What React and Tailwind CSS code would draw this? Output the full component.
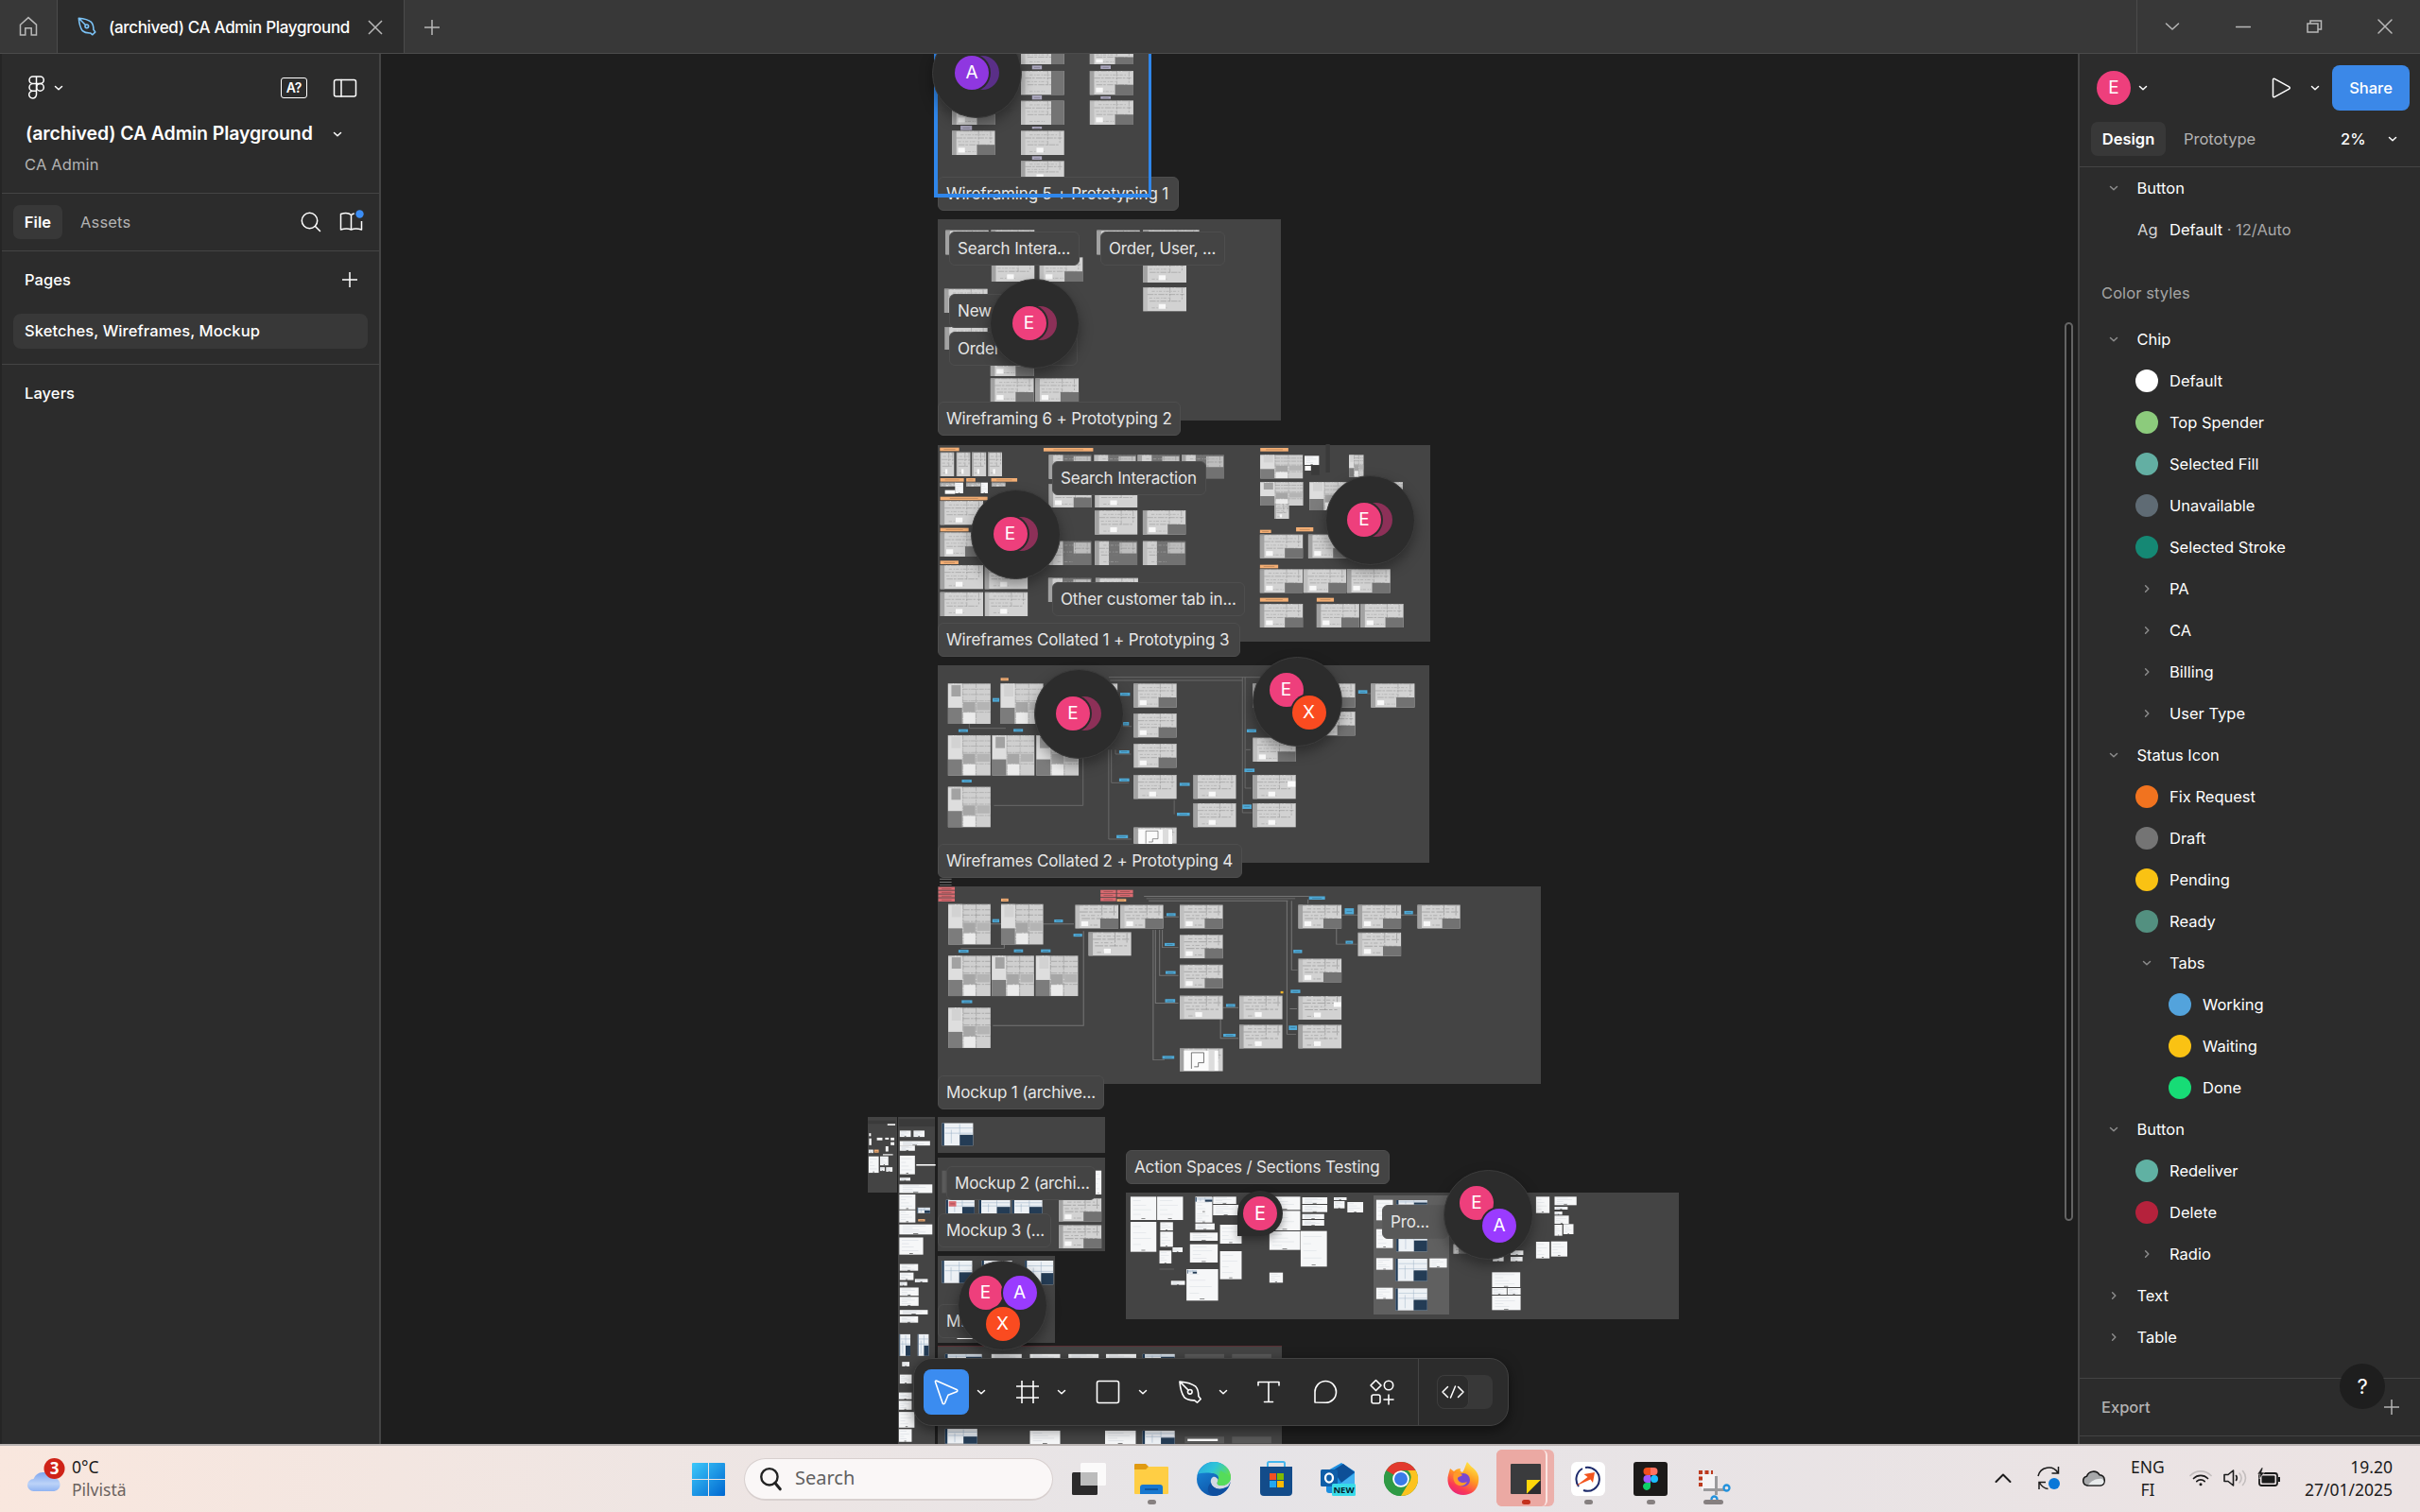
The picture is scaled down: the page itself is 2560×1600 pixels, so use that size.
import React from "react";

/* ---------- small icons ---------- */

const Svg = ({ size = 24, box = 24, className = "", sw = 1.5, children, ...rest }) => (
  <svg width={size} height={size} viewBox={`0 0 ${box} ${box}`} fill="none" stroke="currentColor" strokeWidth={sw}
    strokeLinecap="round" strokeLinejoin="round" className={`shrink-0 ${className}`} {...rest}>
    {children}
  </svg>
);

const ChevDown = ({ className = "" }) => (
  <Svg size={12} box={12} className={className}><path d="M2.5 4.5 6 7.8l3.5-3.3" /></Svg>
);
const ChevRight = ({ className = "" }) => (
  <Svg size={12} box={12} className={className}><path d="M4.6 2.8 7.8 6 4.6 9.2" /></Svg>
);
const Plus = ({ className = "", size = 24 }) => (
  <Svg size={size} className={className}><path d="M12 4v16M4 12h16" strokeLinecap="butt" /></Svg>
);
const PenNib = ({ size = 24, className = "", sw = 1.5 }) => (
  <Svg size={size} className={className} sw={sw}>
    <path d="M2.500 2.500c6 .5 11 1.700 14.500 4.500 1.800 2 2.600 5.500 2.600 8.800l2 2.600-3.200 3.200-2.500-2c-3.300.1-7-.7-9-2.500C4 13.500 3 8.500 2.500 2.500ZM2.800 2.800l7.600 7.600" />
    <circle cx="11.800" cy="11.800" r="2" />
  </Svg>
);

/* ---------- window tab bar ---------- */

function TabBar() {
  return (
    <header className="flex h-[57px] shrink-0 items-stretch border-b border-[#4b4b4b] bg-[#383838] text-[#b8b8b8]">
      <div className="flex w-[61px] items-center justify-center border-r border-[#4b4b4b]">
        <Svg size={24}><path d="M3.500 10.200 12 2.600l8.500 7.600v10.800h-5.300v-7.200H8.800V21H3.500Z" strokeLinejoin="miter" /></Svg>
      </div>
      <div className="flex w-[367px] items-center border-r border-[#4b4b4b] bg-[#2c2c2c] pl-[20px]">
        <PenNib size={22} className="text-[#7cc4f8]" sw={1.7} />
        <span className="ml-[12px] w-[258px] whitespace-nowrap pt-[3px] text-[17px] font-medium tracking-[-0.320px] text-white">(archived) CA Admin Playground</span>
        <Svg size={20} box={20} className="ml-[14px] mt-[1px]"><path d="M3 3l14 14M17 3 3 17" strokeLinecap="butt" /></Svg>
      </div>
      <div className="flex w-[58px] items-center justify-center pt-[1px]"><Plus size={24} /></div>
      <div className="flex-1" />
      <div className="flex w-[300px] items-center border-l border-[#4b4b4b]">
        <div className="flex w-[75px] justify-center"><Svg size={18} box={18}><path d="M2.500 6 9 12l6.500-6" /></Svg></div>
        <div className="flex w-[75px] justify-center"><Svg size={16} box={16}><path d="M0.500 8.500h15" /></Svg></div>
        <div className="flex w-[75px] justify-center">
          <Svg size={18} box={18}><path d="M2 6h11v9H2ZM5 6V3h11.500v9H13" strokeLinejoin="miter" /></Svg>
        </div>
        <div className="flex w-[75px] justify-center"><Svg size={18} box={18}><path d="M2 2l14 14M16 2 2 16" /></Svg></div>
      </div>
    </header>
  );
}

/* ---------- left panel ---------- */

function LeftPanel() {
  return (
    <aside className="flex w-[403px] shrink-0 flex-col border-r-2 border-l-2 border-r-[#444] border-l-[#252525] bg-[#2c2c2c] text-[16.500px] font-medium tracking-[0.080px] text-white">
      <div className="flex h-[148px] flex-col border-b border-[#444] pl-[24px]">
        <div className="mt-[22px] flex h-[28px] items-center">
          <svg width="26" height="28" viewBox="0 0 26 28" fill="none" stroke="currentColor" strokeWidth="1.500">
            <path d="M12.500 2H8.800a3.800 3.800 0 0 0 0 7.600h3.700ZM12.500 2h4a3.800 3.800 0 0 1 0 7.600h-4ZM12.500 9.600H8.800a3.800 3.800 0 0 0 0 7.600h3.700ZM12.500 17.200H8.800a3.900 3.900 0 1 0 3.700 3.900Z" />
            <circle cx="16.500" cy="13.400" r="3.800" />
          </svg>
          <ChevDown className="ml-[4px]" />
          <div className="ml-[229px] flex h-[22px] w-[28px] items-center justify-center rounded-[3px] border-[1.500px] border-white text-[14px] font-semibold leading-none tracking-[-0.300px]">A?</div>
          <Svg size={26} box={26} className="ml-[27px]"><rect x="1.500" y="4.500" width="23" height="17.500" rx="2" /><path d="M9 4.500V22" /></Svg>
        </div>
        <div className="mt-[23px] flex h-[24px] items-center">
          <span className="w-[305px] pl-[1px] whitespace-nowrap text-[19.500px] font-semibold tracking-[-0.110px]">(archived) CA Admin Playground</span>
          <ChevDown className="ml-[20px]" />
        </div>
        <span className="mt-[8px] h-[24px] leading-[24px] font-normal tracking-[0.150px] text-[#b3b3b3]">CA Admin</span>
      </div>
      <div className="flex h-[61px] items-center border-b border-[#444] pl-[12px]">
        <span className="flex h-[36px] w-[52px] items-center justify-center rounded-[7px] bg-[#383838] font-semibold">File</span>
        <span className="ml-[19px] w-[232px] font-normal tracking-[0.150px] text-[#b3b3b3]">Assets</span>
        <Svg size={24}><circle cx="10.500" cy="10.500" r="8.200" /><path d="m16.500 16.500 5 5" /></Svg>
        <svg width="28" height="26" viewBox="0 0 28 26" fill="none" stroke="currentColor" strokeWidth="1.500" className="ml-[17px] shrink-0" strokeLinejoin="round">
          <path d="M13.500 5.500v15.500M13.500 5.500C11 3.300 6 3.400 2.500 4.500V21c3.500-1.200 8.500-1.200 11 0 3-1.200 7-1.200 11 0v-9M13.500 5.500c1-.8 2-1.300 3.300-1.500" />
          <circle cx="22.500" cy="4.500" r="4.200" fill="#3b8df5" stroke="none" />
        </svg>
      </div>
      <div className="flex h-[120px] flex-col border-b border-[#444] px-[12px]">
        <div className="mt-[13px] flex h-[34px] items-center justify-between pr-[7px] pl-[12px]">
          <span>Pages</span>
          <Plus size={24} />
        </div>
        <div className="mt-[19px] flex h-[37px] items-center rounded-[8px] bg-[#383838] pb-[1px] pl-[12px]">Sketches, Wireframes, Mockup</div>
      </div>
      <div className="mt-[18px] pl-[24px] leading-[24px]">Layers</div>
    </aside>
  );
}

/* ---------- canvas drawings ---------- */

const TAG = { o: "#f3ae74", u: "#4fa9d6", p: "#d96a70", v: "#aaa6bd", s: "#3a3a3a", k: "#5a5a5a", y: "#f0b429" };

function Shape({ kind, x, y, w, h }) {
  const seed = (x * 7 + y * 13) % 5;
  if (TAG[kind]) {
    return (
      <g>
        <rect x={x} y={y} width={w} height={h} fill={TAG[kind]} />
        {h > 5 && kind !== "s" && kind !== "k" && kind !== "y" && <rect x={x + w * 0.2} y={y + h * 0.45} width={w * 0.6} height={1.5} fill="#000" opacity="0.35" />}
      </g>
    );
  }
  if (kind === "f") return <rect x={x} y={y} width={w} height={h} fill="#fbfbfb" />;
  if (kind === "q") {
    return (
      <g>
        <rect x={x} y={y} width={w} height={h} fill="#fbfbfb" />
        <rect x={x + w * 0.72} y={y} width={w * 0.17} height={h} fill="#dcdcdc" />
        <path d={`M${x + w * 0.22} ${y + h * 0.9}V${y + h * 0.1}H${x + w * 0.58}V${y + h * 0.6}H${x + w * 0.42}V${y + h * 0.8}H${x + w * 0.3}`} fill="none" stroke="#555" strokeWidth="1.800" />
      </g>
    );
  }
  if (kind === "w") {
    return (
      <g>
        <rect x={x} y={y} width={w} height={h} fill="#f6f7f8" />
        {[0.15, 0.35, 0.55, 0.75].map((t, i) => (
          <rect key={t} x={x + w * 0.1} y={y + h * t} width={w * (0.3 + ((i + seed) % 3) * 0.2)} height="1.200" fill="#9aa7b4" opacity="0.4" />
        ))}
        <rect x={x + w * 0.42} y={y + h * 0.95 - 1} width={w * 0.15} height="1.500" fill="#222" />
      </g>
    );
  }
  if (kind === "n") {
    return (
      <g>
        <rect x={x} y={y} width={w} height={h} fill="#edf1f5" />
        <rect x={x} y={y} width={w * 0.07} height={h} fill="#1f3a56" />
        <rect x={x + w * 0.57} y={y + h * 0.52} width={w * 0.43} height={h * 0.48} fill="#243c55" />
        <path d={`M${x + w * 0.1} ${y + h * 0.22}H${x + w}M${x + w * 0.1} ${y + h * 0.45}H${x + w}M${x + w * 0.57} ${y + h * 0.05}V${y + h * 0.52}M${x + w * 0.3} ${y + h * 0.3}V${y + h * 0.9}`} stroke="#9fb4c8" strokeWidth="1.300" />
      </g>
    );
  }
  if (kind === "t") {
    return (
      <g>
        <rect x={x} y={y} width={w} height={h} fill="#cfcfcf" />
        <rect x={x} y={y} width={w * 0.33} height={h * 0.6} fill="#dedede" />
        <rect x={x} y={y + h * 0.6} width={w * 0.33} height={h * 0.4} fill="#7c7c7c" />
        <rect x={x + w * 0.36} y={y + h * 0.46} width={w * 0.28} height={h * 0.24} fill="#a6a6a6" />
        <rect x={x + w * 0.68} y={y + h * 0.46} width={w * 0.3} height={h * 0.2} fill="#b4b4b4" />
        <rect x={x + w * 0.36} y={y + h * 0.72} width={w * 0.28} height={h * 0.27} fill="#ebebeb" />
        <rect x={x + w * 0.08} y={y + h * 0.04} width={w * 0.22} height={h * 0.28} fill="#8d8d8d" opacity={seed > 1 ? 0.75 : 0.15} />
        <path d={`M${x + w * 0.35} ${y}V${y + h}M${x + w * 0.66} ${y}V${y + h}M${x + w * 0.35} ${y + h * 0.14}H${x + w}M${x + w * 0.35} ${y + h * 0.27}H${x + w}M${x + w * 0.35} ${y + h * 0.43}H${x + w}M${x + w * 0.35} ${y + h * 0.71}H${x + w}M${x} ${y + 1}H${x + w}`} stroke="#8a8a8a" strokeWidth="1.200" strokeDasharray="14 3 5 2" />
      </g>
    );
  }
  const gray = kind === "g";
  return (
    <g>
      <rect x={x} y={y} width={w} height={h} fill={gray ? "#727272" : "#d2d2d2"} />
      {gray && <rect x={x} y={y} width={w * 0.33} height={h} fill="#cfcfcf" />}
      {gray && <rect x={x + w * 0.58} y={y + h * 0.06} width={w * 0.4} height={h * 0.45} fill="#bdbdbd" />}
      <rect x={x} y={y} width={w * 0.1} height={h} fill="#a2a2a2" opacity={seed > 1 ? 1 : 0.4} />
      <path d={`M${x} ${y + 1}H${x + w}M${x + w * 0.1} ${y + h * 0.3}H${x + w * 0.95}M${x + w * 0.15} ${y + h * 0.58}H${x + w * 0.9}M${x + w * 0.62} ${y}V${y + h * 0.6}M${x + w * 0.9} ${y}V${y + h * 0.5}`} stroke="#7c7c7c" strokeWidth="1.400" strokeDasharray="18 3 7 4" opacity="0.8" />
      <path d={`M${x + w * 0.2} ${y + h * 0.17}H${x + w * 0.85}M${x + w * 0.14} ${y + h * 0.45}H${x + w * 0.6}M${x + w * 0.2} ${y + h * 0.86}H${x + w * 0.55}`} stroke="#a6a6a6" strokeWidth="1.800" strokeDasharray="9 5 4 3" />
      {kind === "b" && <rect x={x + w * 0.58} y={y + h * 0.58} width={w * 0.42} height={h * 0.42} fill="#727272" />}
      {kind === "r" && <rect x={x + w * 0.7} y={y} width={w * 0.3} height={h} fill="#747474" />}
      {!gray && kind !== "r" && <rect x={x + w * (kind === "b" ? 0.14 : 0.36)} y={y + h * 0.7} width={w * 0.16} height={h * 0.2} fill="#f8f8f8" />}
    </g>
  );
}

const SECTIONS = [
  { x: 992, y: 0, w: 224, h: 207, c: "#444444" },
  { x: 992, y: 232, w: 363, h: 213, c: "#444444" },
  { x: 992, y: 471, w: 521, h: 208, c: "#444444" },
  { x: 992, y: 704, w: 520, h: 209, c: "#444444" },
  { x: 992, y: 938, w: 638, h: 209, c: "#444444" },
  { x: 992, y: 1182, w: 177, h: 38, c: "#444444" },
  { x: 992, y: 1225, w: 177, h: 99, c: "#444444" },
  { x: 992, y: 1329, w: 124, h: 92, c: "#444444" },
  { x: 992, y: 1425, w: 364, h: 103, c: "#444444" },
  { x: 992, y: 1424, w: 364, h: 1, c: "#5a2f35" },
  { x: 950, y: 1182, w: 39, h: 346, c: "#444444" },
  { x: 918, y: 1182, w: 31, h: 80, c: "#444444" },
  { x: 1191, y: 1262, w: 585, h: 134, c: "#444444" },
  { x: 1453, y: 1265, w: 80, h: 126, c: "#606060" },
];

/* Each board keeps its frames in its own units; sx / sy bring them to canvas pixels. */
const BOARDS = [
  {
    x: 980, y: 50, sx: 0.35714, sy: 0.33333,
    items: [
      ["b", 76, 170, 127, 76], ["b", 76, 265, 127, 77], ["v", 101, 249, 34, 14],
      ["r", 280, 0, 128, 54], ["r", 280, 75, 128, 76], ["r", 280, 170, 128, 76], ["a", 280, 265, 128, 77], ["a", 280, 361, 128, 60],
      ["v", 313, 58, 29, 12], ["v", 313, 153, 29, 13], ["v", 313, 252, 29, 7], ["v", 313, 346, 29, 11],
      ["b", 484, 0, 129, 54], ["b", 484, 75, 129, 76], ["b", 484, 169, 129, 77], ["v", 516, 58, 30, 11], ["v", 516, 156, 30, 8],
      ["a", 57, 581, 127, 77], ["a", 192, 580, 128, 60], ["a", 193, 667, 127, 77], ["b", 335, 667, 128, 77],
      ["a", 53, 767, 128, 76], ["b", 55, 888, 126, 72], ["b", 190, 968, 128, 76], ["b", 190, 1051, 128, 76], ["b", 323, 1051, 128, 76],
      ["a", 505, 581, 127, 77], ["a", 642, 580, 166, 40], ["a", 642, 670, 128, 77], ["a", 642, 762, 128, 76],
    ],
  },
  {
    x: 980, y: 460, sx: 0.35714, sy: 0.33333,
    items: [
      ["o", 40, 41, 57, 11], ["a", 41, 56, 41, 76], ["a", 89, 56, 41, 76], ["a", 135, 56, 42, 76], ["a", 182, 56, 42, 76],
      ["o", 41, 138, 70, 11], ["o", 118, 138, 27, 11], ["o", 192, 138, 77, 11],
      ["a", 41, 152, 46, 12], ["w", 85, 152, 24, 34], ["f", 55, 176, 30, 12], ["a", 118, 152, 42, 12], ["w", 161, 152, 21, 34], ["a", 193, 152, 41, 12],
      ["o", 41, 197, 140, 11], ["a", 41, 210, 127, 76], ["o", 41, 296, 84, 11], ["b", 41, 310, 127, 77],
      ["o", 41, 400, 54, 11], ["a", 41, 414, 127, 76], ["a", 173, 414, 127, 76], ["a", 41, 500, 127, 76], ["a", 173, 500, 127, 76],
      ["o", 347, 42, 147, 11], ["g", 363, 64, 126, 76], ["g", 497, 64, 125, 76], ["g", 626, 64, 125, 76], ["g", 756, 64, 126, 76],
      ["b", 363, 156, 126, 75], ["a", 499, 156, 126, 75], ["a", 499, 240, 126, 77], ["b", 641, 240, 127, 77],
      ["g", 363, 338, 126, 76], ["g", 499, 338, 126, 76], ["g", 641, 338, 127, 76],
      ["g", 361, 455, 128, 76], ["a", 501, 455, 126, 76],
      ["o", 989, 42, 83, 11], ["t", 989, 64, 126, 75], ["w", 1120, 67, 43, 29], ["f", 1121, 99, 18, 15], ["s", 1183, 30, 12, 90], ["s", 1140, 98, 24, 30], ["t", 1252, 64, 43, 70],
      ["t", 989, 150, 127, 75], ["a", 1031, 220, 43, 47], ["t", 1135, 150, 127, 90], ["t", 1290, 150, 121, 60],
      ["o", 988, 302, 33, 10], ["o", 1095, 294, 51, 13], ["b", 988, 317, 127, 75], ["b", 1131, 317, 127, 75],
      ["o", 988, 413, 54, 11], ["b", 988, 427, 127, 75], ["b", 1117, 427, 127, 75], ["b", 1246, 427, 128, 75],
      ["o", 988, 518, 84, 12], ["o", 1156, 518, 51, 12], ["b", 988, 537, 127, 75], ["b", 1156, 537, 126, 75], ["b", 1286, 537, 127, 75],
      ["t", 64, 790, 126, 128], ["t", 220, 790, 126, 128], ["o", 220, 772, 23, 9], ["u", 196, 836, 20, 12],
      ["u", 95, 935, 28, 9], ["u", 258, 934, 28, 9], ["t", 64, 954, 126, 128], ["t", 195, 954, 125, 128], ["t", 326, 954, 125, 128],
      ["u", 105, 1095, 29, 9], ["t", 64, 1118, 126, 128],
      ["a", 440, 790, 126, 76], ["u", 574, 819, 29, 10], ["u", 582, 912, 18, 11], ["u", 571, 1002, 30, 10], ["u", 571, 1091, 30, 10], ["u", 563, 1271, 34, 10],
      ["b", 614, 790, 127, 76], ["b", 614, 885, 127, 76], ["b", 614, 981, 127, 76], ["a", 614, 1080, 127, 76], ["a", 614, 1247, 127, 51], ["q", 628, 1253, 100, 50],
      ["u", 750, 1105, 30, 10], ["a", 791, 1080, 126, 76], ["u", 742, 1200, 38, 10], ["a", 791, 1170, 126, 76],
      ["u", 949, 935, 28, 10], ["u", 942, 1060, 30, 11], ["u", 936, 1174, 27, 14],
      ["b", 967, 790, 127, 76], ["b", 967, 962, 127, 76], ["a", 967, 1080, 127, 76], ["f", 1070, 1100, 23, 18], ["a", 967, 1170, 127, 76],
      ["b", 1144, 790, 126, 76], ["b", 1144, 879, 126, 76], ["u", 1279, 811, 27, 11], ["b", 1317, 790, 129, 76],
    ],
    lines: "M127 918V932H235M200 1177H464V1020M540 770H1000M544 780H936M540 1000V1284H607M548 1000V1105H600M560 1000V1014H606M582 926H608M734 1160V1205M936 770V1200H965M944 770V1122H962M946 1000H960M1306 822H1316",
  },
  {
    x: 900, y: 920, sx: 0.48469, sy: 0.39541,
    items: [
      ["p", 191, 47, 36, 8], ["p", 191, 57, 36, 8], ["p", 191, 67, 36, 8], ["p", 191, 77, 36, 9],
      ["o", 328, 78, 16, 8], ["p", 545, 55, 34, 9], ["p", 581, 55, 35, 9], ["p", 545, 65, 34, 9], ["p", 581, 65, 35, 9], ["p", 545, 76, 34, 9], ["o", 581, 79, 20, 7],
      ["t", 213, 93, 92, 108], ["t", 328, 93, 92, 108], ["t", 213, 231, 92, 108], ["t", 308, 231, 92, 108], ["t", 404, 231, 92, 108], ["t", 213, 370, 92, 108],
      ["u", 309, 133, 15, 9], ["u", 444, 134, 19, 8], ["u", 235, 215, 22, 8], ["u", 356, 214, 20, 8], ["u", 415, 214, 21, 8], ["u", 242, 350, 23, 8], ["u", 486, 172, 19, 8],
      ["b", 490, 95, 94, 63], ["b", 588, 95, 94, 63], ["a", 519, 168, 93, 63],
      ["u", 689, 117, 20, 8], ["u", 685, 197, 22, 8], ["u", 687, 272, 22, 8], ["u", 686, 347, 22, 9], ["u", 680, 499, 26, 8],
      ["b", 718, 95, 94, 63], ["b", 718, 175, 94, 63], ["b", 718, 255, 94, 63], ["a", 718, 338, 94, 63], ["a", 718, 479, 94, 61], ["q", 727, 485, 75, 54],
      ["u", 819, 360, 20, 8], ["u", 813, 440, 27, 8], ["a", 848, 338, 94, 63], ["a", 848, 416, 94, 63], ["y", 938, 326, 6, 6],
      ["u", 1000, 72, 35, 9], ["u", 966, 215, 19, 9], ["u", 960, 322, 21, 9], ["u", 956, 418, 18, 12], ["u", 1078, 104, 20, 16], ["u", 1208, 111, 19, 9], ["u", 1080, 191, 16, 8],
      ["b", 977, 95, 94, 63], ["b", 977, 239, 94, 63], ["a", 977, 339, 94, 63], ["f", 1054, 355, 16, 13], ["a", 977, 416, 94, 63],
      ["b", 1107, 95, 94, 63], ["b", 1107, 169, 94, 63], ["b", 1237, 95, 93, 63],
      ["n", 199, 679, 68, 60], ["n", 208, 884, 62, 37], ["p", 214, 888, 16, 14], ["n", 280, 884, 68, 37], ["n", 352, 884, 66, 37],
      ["w", 534, 806, 13, 64], ["k", 199, 806, 9, 60], ["b", 454, 880, 93, 62], ["b", 454, 952, 93, 62],
      ["n", 199, 1047, 66, 60], ["n", 286, 1047, 66, 60], ["n", 380, 1047, 62, 64], ["f", 232, 1254, 34, 3],
      ["n", 206, 1297, 80, 14], ["w", 307, 1297, 66, 14], ["w", 391, 1297, 66, 14], ["w", 475, 1297, 66, 14], ["w", 557, 1297, 66, 14], ["n", 637, 1297, 70, 14], ["k", 729, 1297, 86, 14], ["k", 832, 1297, 86, 14],
      ["n", 206, 1497, 70, 40], ["w", 391, 1502, 66, 36], ["w", 555, 1502, 67, 36], ["n", 637, 1502, 70, 36], ["k", 729, 1518, 86, 18], ["k", 832, 1518, 86, 18], ["f", 735, 1524, 66, 6],
      ["s", 105, 668, 78, 20], ["w", 107, 699, 24, 17], ["w", 137, 699, 24, 17], ["w", 107, 727, 66, 12], ["w", 107, 739, 33, 14], ["w", 107, 766, 33, 50], ["f", 143, 789, 42, 4], ["w", 107, 825, 23, 8],
      ["w", 106, 843, 72, 23], ["w", 106, 870, 35, 40], ["w", 106, 912, 35, 33], ["n", 145, 905, 28, 15], ["o", 147, 936, 15, 6], ["w", 106, 950, 72, 27], ["w", 106, 985, 52, 46],
      ["w", 107, 1056, 40, 18], ["w", 107, 1079, 30, 20], ["w", 140, 1096, 28, 9], ["w", 107, 1104, 16, 10], ["w", 107, 1119, 41, 22], ["w", 107, 1144, 41, 24], ["w", 107, 1179, 61, 12], ["w", 107, 1196, 40, 17],
      ["n", 106, 1244, 24, 58], ["n", 146, 1244, 24, 58], ["w", 112, 1318, 16, 12], ["w", 107, 1352, 26, 24], ["w", 105, 1400, 28, 18], ["w", 105, 1422, 28, 24], ["w", 105, 1452, 34, 42], ["w", 105, 1498, 28, 34],
      ["s", 38, 672, 60, 9], ["f", 80, 681, 17, 4], ["f", 40, 706, 4, 8], ["f", 40, 720, 5, 18], ["f", 57, 718, 12, 7], ["f", 75, 718, 8, 5], ["f", 87, 718, 8, 7], ["f", 87, 730, 8, 8], ["f", 76, 741, 6, 14], ["w", 39, 750, 10, 9], ["o", 51, 750, 10, 8], ["w", 39, 768, 22, 44], ["w", 64, 768, 18, 24], ["w", 64, 797, 10, 10], ["w", 77, 797, 14, 12], ["f", 70, 762, 22, 3],
    ],
    lines: "M194 26H220M194 34H220M194 42H220M305 146H328M420 146H487M335 201V211H240M310 418H508V165M640 72H1000M645 78H970M650 84H954M660 162V510H685M665 162V358H715M674 162V284H715M680 162V209H715M684 127H716M807 401V452H846M812 370H846M952 84V441H972M962 84V269H975M958 373H974M998 80V92M1072 122H1106M1060 158V200H1105M1201 122H1236",
  },
  {
    x: 1160, y: 1160, sx: 0.40816, sy: 0.33333,
    items: [
      ["w", 88, 319, 67, 74], ["w", 157, 319, 67, 74], ["w", 88, 399, 67, 95], ["w", 165, 400, 33, 26], ["w", 165, 430, 33, 48], ["w", 163, 490, 31, 41], ["w", 197, 480, 26, 15], ["k", 163, 547, 38, 4], ["w", 193, 586, 36, 13],
      ["w", 256, 319, 44, 50], ["n", 256, 321, 44, 14], ["w", 302, 319, 60, 23], ["w", 302, 345, 66, 33], ["w", 256, 369, 44, 32], ["w", 256, 404, 50, 20], ["w", 242, 433, 72, 26], ["w", 242, 470, 72, 58], ["w", 320, 408, 56, 60],
      ["w", 320, 492, 56, 89], ["w", 233, 549, 82, 100], ["n", 235, 551, 25, 12], ["w", 448, 319, 80, 42], ["w", 448, 364, 80, 62], ["w", 448, 429, 80, 59],
      ["w", 533, 321, 65, 21], ["w", 533, 345, 65, 23], ["w", 533, 374, 57, 16], ["w", 533, 393, 57, 18], ["w", 529, 428, 68, 113], ["w", 448, 560, 35, 32],
      ["w", 615, 321, 33, 9], ["w", 615, 333, 28, 23], ["w", 650, 336, 41, 33],
      ["w", 725, 329, 43, 65], ["n", 777, 330, 80, 14], ["w", 725, 422, 43, 60], ["n", 777, 420, 80, 73], ["w", 725, 514, 43, 37], ["n", 775, 516, 82, 71], ["w", 863, 515, 45, 29], ["w", 725, 608, 43, 36], ["n", 775, 610, 82, 70],
      ["g", 925, 470, 40, 30], ["w", 1027, 500, 28, 24], ["w", 1073, 490, 33, 14], ["w", 1073, 510, 31, 14], ["w", 1025, 559, 73, 47], ["w", 1025, 609, 38, 21], ["w", 1065, 609, 34, 21], ["w", 1025, 633, 74, 46],
      ["w", 1139, 319, 35, 52], ["w", 1187, 319, 57, 27], ["w", 1187, 351, 34, 9], ["w", 1187, 366, 20, 10], ["w", 1187, 379, 37, 26], ["w", 1187, 408, 20, 35], ["w", 1210, 406, 26, 32], ["w", 1139, 462, 35, 53], ["w", 1178, 461, 42, 48],
    ],
  },
];

const LABELS = [
  { t: "Wireframing 5 + Prototyping 1", x: 992, y: 187, w: 255 },
  { t: "Wireframing 6 + Prototyping 2", x: 992, y: 425, w: 257 },
  { t: "Search Intera...", x: 1004, y: 245, w: 138 },
  { t: "Order, User, ...", x: 1164, y: 245, w: 132 },
  { t: "New", x: 1004, y: 311, w: 110 },
  { t: "Order", x: 1004, y: 351, w: 136 },
  { t: "Wireframes Collated 1 + Prototyping 3", x: 992, y: 659, w: 320 },
  { t: "Search Interaction", x: 1113, y: 488, w: 163 },
  { t: "Other customer tab in...", x: 1113, y: 616, w: 204 },
  { t: "Wireframes Collated 2 + Prototyping 4", x: 992, y: 893, w: 322 },
  { t: "Mockup 1 (archive...", x: 992, y: 1138, w: 176 },
  { t: "Mockup 2 (archi...", x: 1001, y: 1234, w: 158 },
  { t: "Mockup 3 (...", x: 992, y: 1284, w: 120 },
  { t: "M...", x: 992, y: 1380, w: 60 },
  { t: "Action Spaces / Sections Testing", x: 1191, y: 1217, w: 279 },
  { t: "Pro...", x: 1462, y: 1275, w: 70, light: true },
];

const PINK = "#ee3f7c";
const PURPLE = "#9a3bff";
const ORANGE = "#fa4b20";
const CLUSTERS = [
  { x: 1033, y: 77, a: [["A", -5, 0, "#8f37e0"]], ghost: "#5a2f88" },
  { x: 1094, y: 342, a: [["E", -5.5, 0, PINK]], ghost: "#8d3058" },
  { x: 1074, y: 565, a: [["E", -5.5, 0, PINK]], ghost: "#8d3058" },
  { x: 1449, y: 550, a: [["E", -6, 0, PINK]], ghost: "#8d3058" },
  { x: 1141, y: 755, a: [["E", -6, 0, PINK]], ghost: "#8d3058" },
  { x: 1372.5, y: 742, a: [["E", -12, -12, PINK], ["X", 12, 12, ORANGE]] },
  { x: 1060.5, y: 1381, a: [["E", -18, -13, PINK], ["A", 18, -13, PURPLE], ["X", 0, 20, ORANGE]] },
  { x: 1574, y: 1285, a: [["E", -12, -12, PINK], ["A", 12, 12, PURPLE]] },
];

function Cluster({ x, y, a, ghost }) {
  return (
    <div className="absolute size-[95px] rounded-full border border-[#3c3c3c] bg-[#2c2c2c] shadow-[0_6px_14px_rgba(0,0,0,0.35)]" style={{ left: x - 47.5, top: y - 47.5 }}>
      {ghost && <div className="absolute size-[36px] rounded-full" style={{ left: 46.5 + 6 - 18, top: 28.5, background: ghost }} />}
      {a.map(([ch, dx, dy, c]) => (
        <div key={ch} className="absolute flex size-[36px] items-center justify-center rounded-full text-[19px] text-white shadow-[0_0_0_2px_#2c2c2c]" style={{ left: 46.5 + dx - 18, top: 46.5 + dy - 18, background: c }}>
          {ch}
        </div>
      ))}
    </div>
  );
}

function Canvas() {
  return (
    <main className="relative min-w-0 flex-1 overflow-hidden bg-[#1e1e1e]">
      <div className="absolute top-[-57px] left-[-403px] h-[1600px] w-[2560px]">
        <svg width="2560" height="1600" viewBox="0 0 2560 1600" className="absolute inset-0">
          {SECTIONS.map((s, i) => <rect key={i} x={s.x} y={s.y} width={s.w} height={s.h} fill={s.c} />)}
          {BOARDS.map((b, i) => (
            <g key={i} transform={`translate(${b.x} ${b.y}) scale(${b.sx} ${b.sy})`}>
              {b.lines && <path d={b.lines} fill="none" stroke="#747474" strokeWidth="2.200" />}
              {b.items.map(([k, x, y, w, h], j) => <Shape key={j} kind={k} x={x} y={y} w={w} h={h} />)}
            </g>
          ))}
        </svg>
        {LABELS.map((l) => (
          <div key={l.t} className={`absolute flex h-[36px] items-center rounded-[6px] border pt-[1px] pl-[8px] text-[17px] tracking-[-0.150px] whitespace-nowrap text-[#e6e6e6] ${l.light ? "border-[#5a5a5a] bg-[#585858]" : "border-[#4e4e4e] bg-[#444444]"}`}
            style={{ left: l.x, top: l.y, width: l.w }}>
            {l.t}
          </div>
        ))}
        <div className="absolute top-0 left-[988px] h-[209px] w-[230px] border-[4px] border-r-[3px] border-[#2f86ea]" />
        {CLUSTERS.map((c, i) => <Cluster key={i} {...c} />)}
        <div className="absolute top-[1260px] left-[1309px] flex size-[48px] items-center justify-center rounded-full rounded-bl-[3px] bg-[#2c2c2c] shadow-[0_4px_10px_rgba(0,0,0,0.35)]">
          <div className="flex size-[36px] items-center justify-center rounded-full bg-[#ee3f7c] text-[20px] text-white">E</div>
        </div>
      </div>
      <div className="absolute top-[284px] right-[5px] h-[951px] w-[9px] rounded-full border-2 border-[#646464] bg-[#1a1a1a]" />
      <Toolbar />
    </main>
  );
}

const Tool = ({ children }) => <div className="flex size-[48px] items-center justify-center">{children}</div>;

function Toolbar() {
  return (
    <div className="absolute top-[1380px] left-[563px] flex h-[72px] w-[630px] items-center rounded-[20px] border border-[#424242] bg-[#2c2c2c] pl-[10px] text-white shadow-[0_4px_14px_rgba(0,0,0,0.5)]">
      <div className="flex size-[48px] items-center justify-center rounded-[8px] bg-[#3b8cf0]">
        <Svg size={28} box={28} sw={1.6}><path d="M2.500 3.500c-.4-1.200.6-1.700 1.500-1.300l21 9.300c1.200.6 1 1.800 0 2.200l-9 3.500-3.600 8.800c-.5 1-1.700.9-2.200 0Z" /></Svg>
      </div>
      <ChevDown className="ml-[7px]" />
      <div className="ml-[19px]"><Tool><Svg size={28} box={28} sw={1.6}><path d="M8 2v24M20 2v24M2 8h24M2 20h24" strokeLinecap="butt" /></Svg></Tool></div>
      <ChevDown className="ml-[6px]" />
      <div className="ml-[19px]"><Tool><Svg size={28} box={28} sw={1.6}><rect x="2.500" y="2.500" width="23" height="23" rx="2" /></Svg></Tool></div>
      <ChevDown className="ml-[7px]" />
      <div className="ml-[20px]"><Tool><PenNib size={28} sw={1.35} /></Tool></div>
      <ChevDown className="ml-[5px]" />
      <div className="ml-[18px]"><Tool><Svg size={28} box={28} sw={1.6}><path d="M3 7V3.500h22V7M14 3.500v21M9.500 24.500h9" /></Svg></Tool></div>
      <div className="ml-[12px]"><Tool><Svg size={28} box={28} sw={1.6}><path d="M3 25V14A11 11.300 0 0 1 25.500 14 11 11.300 0 0 1 14 25.300Z" /></Svg></Tool></div>
      <div className="ml-[12px]"><Tool>
        <Svg size={28} box={28} sw={1.6}>
          <path d="M7.500 1.500 13 7l-5.500 5.500L2 7ZM21 17v10M16 22h10" /><circle cx="21" cy="7" r="4.700" /><rect x="3" y="17" width="9" height="9" rx="2" />
        </Svg>
      </Tool></div>
      <div className="ml-[14px] h-full w-px bg-[#444]" />
      <div className="ml-[19px] flex h-[36px] w-[59px] rounded-[8px] bg-[#383838]">
        <div className="flex h-full w-[34px] items-center justify-center rounded-[8px] border border-[#3d3d3d] bg-[#2c2c2c]">
          <Svg size={26} box={26} sw={1.5}><path d="M7.500 7.500 2 13l5.500 5.500M18.500 7.500 24 13l-5.500 5.500M15.500 7l-5 12" /></Svg>
        </div>
      </div>
    </div>
  );
}

/* ---------- right panel ---------- */

const TREE = [
  [0, "Chip", "down"], [1, "Default", "#ffffff"], [1, "Top Spender", "#8ccb7c"], [1, "Selected Fill", "#63afa3"], [1, "Unavailable", "#5f6b74"], [1, "Selected Stroke", "#158874"],
  [1, "PA", "right"], [1, "CA", "right"], [1, "Billing", "right"], [1, "User Type", "right"],
  [0, "Status Icon", "down"], [1, "Fix Request", "#f1731f"], [1, "Draft", "#747474"], [1, "Pending", "#fac213"], [1, "Ready", "#539080"],
  [1, "Tabs", "down"], [2, "Working", "#53a3dc"], [2, "Waiting", "#fac213"], [2, "Done", "#17dc76"],
  [0, "Button", "down"], [1, "Redeliver", "#60b1a3"], [1, "Delete", "#b5223c"], [1, "Radio", "right"], [0, "Text", "right"], [0, "Table", "right"],
];
const INDENT = ["pl-[23px]", "pl-[57.500px]", "pl-[92.500px]"];

function TreeRow({ level, label, mark }) {
  return (
    <div className={`flex h-[44px] shrink-0 items-center ${INDENT[level]}`}>
      <div className="flex w-[26px] shrink-0 items-center justify-center">
        {mark === "down" ? <ChevDown className="text-[#8c8c8c]" /> : mark === "right" ? <ChevRight className="text-[#8c8c8c]" /> : (
          <span className="size-[24px] rounded-full" style={{ background: mark }} />
        )}
      </div>
      <span className="ml-[11.500px]">{label}</span>
    </div>
  );
}

function RightPanel() {
  return (
    <aside className="relative flex w-[362px] shrink-0 flex-col border-l-2 border-[#444] bg-[#2c2c2c] text-[16.500px] text-white">
      <div className="flex h-[120px] shrink-0 flex-col border-b border-[#444]">
        <div className="mt-[12px] flex h-[48px] items-center pl-[18px]">
          <div className="flex size-[36px] items-center justify-center rounded-full bg-[#ee3f7c] text-[19px]">E</div>
          <ChevDown className="ml-[7px]" />
          <Svg size={24} className="ml-[128px]"><path d="M3.500 3.300c0-1 .8-1.400 1.600-1l15.500 8.600c.9.500.9 1.700 0 2.200L5.100 21.700c-.8.400-1.600 0-1.600-1Z" /></Svg>
          <ChevDown className="ml-[18px]" />
          <div className="ml-[12px] flex h-[48px] w-[82px] items-center justify-center rounded-[8px] bg-[#3b88e8] font-medium">Share</div>
        </div>
        <div className="mt-[12px] flex h-[36px] items-center pl-[12px] font-medium">
          <span className="flex h-[36px] w-[79px] items-center justify-center rounded-[7px] bg-[#383838] font-semibold">Design</span>
          <span className="ml-[19px] w-[166px] font-normal text-[#b3b3b3]">Prototype</span>
          <span className="w-[49px]">2%</span>
          <ChevDown />
        </div>
      </div>
      <div className="flex flex-1 flex-col">
        <TreeRow level={0} label="Button" mark="down" />
        <div className="flex h-[44px] items-center pl-[61px]">
          <span className="w-[34px] text-[#d5d5d5]">Ag</span>
          <span className="whitespace-pre">Default<span className="text-[#a8a8a8]"> · 12/Auto</span></span>
        </div>
        <div className="mt-[23px] flex h-[44px] items-center pl-[23px] tracking-[0.080px] text-[#a5a5a5]">Color styles</div>
        <div className="mt-[5px] flex flex-col">
          {TREE.map(([lv, t, m], i) => <TreeRow key={i} level={lv} label={t} mark={m} />)}
        </div>
        <div className="mt-[21px] flex h-[62px] items-center justify-between border-t border-b border-[#444] pr-[18px] pl-[23px] font-medium text-[#b3b3b3]">
          <span>Export</span>
          <Plus size={24} />
        </div>
      </div>
      <div className="absolute top-[1386px] left-[275px] flex size-[48px] items-center justify-center rounded-full bg-[#1e1e1e] text-[22px]">?</div>
    </aside>
  );
}

/* ---------- taskbar ---------- */

const App66 = ({ children, dot = "" }) => (
  <div className="relative flex h-full w-[66px] items-center justify-center">
    {children}
    {dot && <div className={`absolute bottom-[8px] h-[5px] rounded-full ${dot}`} />}
  </div>
);

function Taskbar() {
  return (
    <footer className="flex h-[72px] shrink-0 items-center border-t-2 border-[#bab4b3] bg-linear-to-r from-[#f9e7de] via-[#e6e4e7] via-50% to-[#ece3e3] font-['Noto_Sans',sans-serif] text-[#1b1b1b]">
      <div className="flex w-[732px] items-center pb-[3px] pl-[28px]">
        <svg width="42" height="42" viewBox="0 0 42 42">
          <defs><linearGradient id="cloud" x1="0" y1="0" x2="0" y2="1"><stop offset="0" stopColor="#7fa6ee" /><stop offset="0.600" stopColor="#bcd3f8" /><stop offset="1" stopColor="#8fb3f2" /></linearGradient></defs>
          <path d="M7.500 35a6.500 6.500 0 0 1 0-13 11 11 0 0 1 20-1 7 7 0 0 1 2 14Z" fill="url(#cloud)" />
          <circle cx="29.500" cy="11" r="11" fill="#cf2318" />
          <text x="29.500" y="17" textAnchor="middle" fontSize="17" fontWeight="700" fill="#fff" fontFamily="Noto Sans">3</text>
        </svg>
        <div className="ml-[6px] flex flex-col text-[17.500px] leading-[24px]">
          <span>0°C</span>
          <span className="text-[#6b625e]">Pilvistä</span>
        </div>
      </div>
      <svg width="35" height="35" viewBox="0 0 35 35">
        <defs><linearGradient id="win" x1="0" y1="0" x2="1" y2="1"><stop offset="0" stopColor="#3cc8fa" /><stop offset="1" stopColor="#0067d0" /></linearGradient></defs>
        <path d="M1 0h16v17H0V1a1 1 0 0 1 1-1ZM18 0h16a1 1 0 0 1 1 1v16H18ZM0 18h17v17H1a1 1 0 0 1-1-1ZM18 18h17v16a1 1 0 0 1-1 1H18Z" fill="url(#win)" />
      </svg>
      <div className="ml-[20px] flex h-[45px] w-[327px] items-center rounded-full border border-b-2 border-[#d8d0cf] bg-[#faf7f7] pl-[14px] text-[20px] text-[#606060]">
        <Svg size={26} sw={2.2} className="text-[#222]"><circle cx="11" cy="10" r="8" /><path d="m16.500 16 5 6" strokeWidth="2.800" /></Svg>
        <span className="ml-[13px] pb-[1px]">Search</span>
      </div>
      <div className="ml-[5px] flex h-full items-center">
        <App66>
          <svg width="36" height="36" viewBox="0 0 36 36"><rect x="0" y="11" width="27" height="24" rx="1.500" fill="#2b2a2b" /><rect x="9" y="1" width="27" height="24" rx="1.500" fill="#fbfafa" /><path d="M9 11h18v14H9Z" fill="#bcbcbc" /></svg>
        </App66>
        <App66 dot="w-[9px] bg-[#868080]">
          <svg width="36" height="36" viewBox="0 0 36 36">
            <path d="M0 3a1 1 0 0 1 1-1h11l3 3v4H0Z" fill="#e09a12" /><path d="M0 8h12l3-3h20a1 1 0 0 1 1 1v27a1 1 0 0 1-1 1H1a1 1 0 0 1-1-1Z" fill="#ffce44" /><path d="M6 34V27a3 3 0 0 1 3-3h18a3 3 0 0 1 3 3v7Z" fill="#1777cf" /><path d="M11 29h14" stroke="#0b4d92" strokeWidth="1.500" />
          </svg>
        </App66>
        <App66>
          <svg width="36" height="36" viewBox="0 0 36 36">
            <defs>
              <linearGradient id="eg1" x1="0" y1="0" x2="1" y2="0.500"><stop offset="0" stopColor="#28a6e0" /><stop offset="0.500" stopColor="#2fc5d8" /><stop offset="1" stopColor="#63e04a" /></linearGradient>
              <linearGradient id="eg2" x1="0" y1="0" x2="0.600" y2="1"><stop offset="0" stopColor="#1b8fe0" /><stop offset="1" stopColor="#0d50a4" /></linearGradient>
            </defs>
            <circle cx="18" cy="18" r="18" fill="url(#eg2)" />
            <path d="M1 13C4 4 11 0 18 0c10 0 18 7 18 16 0 6-5 9-10 9-4 0-5-2-4-4 3-4 0-9-6-9C9 11 3 12 1 13Z" fill="url(#eg1)" />
            <path d="M21 17c-3-3-7 0-6 5 1 5 7 8 13 6l5-2 3-5V16c0 6-5 9-10 9-4 0-5-2-4-4 1-1 1-3-1-4Z" fill="#e9e5e7" opacity="0.900" />
            <path d="M36 16c0 6-5 9-10 9-4 0-5-2-4-4l3-12Z" fill="#55dc5a" />
            <path d="M15 22c1 5 7 8 13 6 2 0 4-1 5-2-3 6-8 10-15 10-6-1-9-8-3-14Z" fill="#0e4f9f" />
          </svg>
        </App66>
        <App66>
          <svg width="36" height="38" viewBox="0 0 36 38">
            <path d="M9 7V2.500A1.500 1.500 0 0 1 10.500 1h15A1.500 1.500 0 0 1 27 2.500V7" fill="none" stroke="#45b6ee" strokeWidth="2" />
            <path d="M1 6h34v27a4 4 0 0 1-4 4H5a4 4 0 0 1-4-4Z" fill="#134c8a" />
            <path d="M11 13h7v7h-7Z" fill="#f25022" /><path d="M19 13h7v7h-7Z" fill="#7fba00" /><path d="M11 21h7v7h-7Z" fill="#22a7f0" /><path d="M19 21h7v7h-7Z" fill="#ffb900" />
          </svg>
        </App66>
        <App66>
          <svg width="38" height="36" viewBox="0 0 38 36">
            <path d="M6 10 22 1l14 9v20a3 3 0 0 1-3 3H9a3 3 0 0 1-3-3Z" fill="#1c8ee0" /><path d="M13 9l11-7 12 9-14 11Z" fill="#0d4f97" /><path d="M36 12v16H14Z" fill="#42b2f2" />
            <rect x="0" y="8" width="18" height="18" rx="1.500" fill="#0f5ea8" /><ellipse cx="9" cy="17" rx="4" ry="4.600" fill="none" stroke="#fff" strokeWidth="2.300" />
            <rect x="12" y="23" width="25" height="13" rx="1.500" fill="#39dbe8" /><text x="24.500" y="33" textAnchor="middle" fontSize="9.500" fontWeight="700" fill="#05222b" fontFamily="Noto Sans">NEW</text>
          </svg>
        </App66>
        <App66>
          <svg width="36" height="36" viewBox="0 0 36 36">
            <circle cx="18" cy="18" r="18" fill="#2f9a45" />
            <path d="M2.400 9A18 18 0 0 1 33.600 9H18a9 9 0 0 0-8 5Z" fill="#e23a2e" /><path d="M2.400 9 10.500 22.500 18 18V9H18Z" fill="#e23a2e" />
            <path d="M2.400 9A18 18 0 0 0 18 36l8-13.500Z" fill="#2f9a45" /><path d="M33.600 9A18 18 0 0 1 18 36l8-13.500a9 9 0 0 0-1-13.500Z" fill="#fcc31f" />
            <circle cx="18" cy="18" r="8.800" fill="#fff" /><circle cx="18" cy="18" r="7" fill="#3a7be8" />
          </svg>
        </App66>
        <App66>
          <svg width="36" height="36" viewBox="0 0 36 36">
            <defs><linearGradient id="ff" x1="0.800" y1="0" x2="0.300" y2="1"><stop offset="0" stopColor="#fff04a" /><stop offset="0.450" stopColor="#ff9a22" /><stop offset="0.800" stopColor="#fb3a55" /><stop offset="1" stopColor="#e8257a" /></linearGradient></defs>
            <path d="M22 0c3 3 4 5 7 7 4 4 6 8 5 14-1 9-8 14-16 14S2 29 1.500 20C1 15 3 11 4 7l4 3c2-2 4-3 7-3-1 2 0 3 2 4 2-2 3-7 5-11Z" fill="url(#ff)" />
            <circle cx="18" cy="19" r="7" fill="#7a48d0" /><path d="M8 12c4-1 7 0 9 2-2 2-4 1-5 3 0 5 6 6 10 4-2 5-9 6-13 1-2-3-2-7-1-10Z" fill="#ff9a2a" />
          </svg>
        </App66>
        <App66 dot="w-[9px] bg-[#c4311d]">
          <div className="absolute top-[4px] right-[3px] left-[2px] h-[60px] rounded-[6px] bg-[#ecb0ab]" />
          <div className="absolute top-[4px] right-[10px] left-[2px] h-[60px] rounded-[6px] border-r-2 border-[#fbe6e3] bg-[#eba9a3]" />
          <svg width="32" height="32" viewBox="0 0 32 32" className="relative"><rect width="32" height="32" rx="1" fill="#3a3b3d" /><path d="M17 32V17h15Z" fill="#ffd60a" /><path d="M17 32h15V17Z" fill="#2d2d2f" /></svg>
        </App66>
        <App66 dot="w-[9px] bg-[#868080]">
          <div className="flex size-[36px] items-center justify-center rounded-[6px] bg-white">
            <svg width="30" height="30" viewBox="0 0 30 30"><path d="M5 23A13 13 0 0 1 9 4M12 3a12.500 12.500 0 1 1-2 24" fill="none" stroke="#1d2a6b" strokeWidth="2" /><path d="M2 22.500 14.500 13l-4-3L22 8l-2 11-2.500-3.500Z" fill="#f2551f" /></svg>
          </div>
        </App66>
        <App66 dot="w-[9px] bg-[#868080]">
          <svg width="36" height="36" viewBox="0 0 36 36">
            <rect width="36" height="36" rx="3" fill="#1c1a19" /><path d="M18 6h-3.500a4 4 0 0 0 0 8H18Z" fill="#f24e1e" /><path d="M18 6h3.500a4 4 0 0 1 0 8H18Z" fill="#ff7262" /><path d="M18 14h-3.500a4 4 0 0 0 0 8H18Z" fill="#a259ff" /><circle cx="22" cy="18" r="4" fill="#1abcfe" /><path d="M18 22h-3.500a4 4 0 1 0 3.500 4Z" fill="#0fcf6a" />
          </svg>
        </App66>
        <App66 dot="w-[21px] bg-[#868080]">
          <svg width="36" height="36" viewBox="0 0 36 36" className="relative top-[8px] left-[2px]">
            <rect x="4" y="5" width="15" height="16" fill="#f5f3f4" />
            <path d="M1 3h15M3 1v18" fill="none" stroke="#bd3a1e" strokeWidth="4" strokeDasharray="4 2.500" />
            <path d="M19.500 7v20M6 21.500h22" stroke="#9a9a9c" strokeWidth="3" /><circle cx="30.500" cy="19.500" r="3" fill="none" stroke="#2492dc" strokeWidth="2.300" /><circle cx="17.500" cy="31.500" r="3" fill="none" stroke="#2492dc" strokeWidth="2.300" />
          </svg>
        </App66>
      </div>
      <div className="flex flex-1 items-center justify-end pr-[29px] pb-[3px] text-[17.500px] leading-[24px]">
        <Svg size={20} box={20} sw={2}><path d="m2.500 14 7.500-7.500 7.500 7.500" /></Svg>
        <svg width="26" height="28" viewBox="0 0 26 28" fill="none" stroke="#1b1b1b" strokeWidth="1.500" className="ml-[25px]">
          <path d="M2 12A11.500 11.500 0 0 1 23 8.500M23.500 2v7h-7M3 26v-7.500h7M3.500 19c2 3.500 5 6 9 6.500" /><circle cx="19" cy="20" r="6" fill="#0a78d8" stroke="none" />
        </svg>
        <svg width="26" height="20" viewBox="0 0 26 20" className="ml-[22px]"><path d="M6 18a5 5 0 0 1-.5-9.800A7.500 7.500 0 0 1 19 6.800 5.700 5.700 0 0 1 20 18Z" fill="#a7a8aa" stroke="#1b1b1b" strokeWidth="1.600" /><path d="M7 17.200c3-4 8-7 14-6.500 4 2 3 6-1 6.500Z" fill="#e8ebec" /></svg>
        <div className="ml-[26px] flex w-[36px] flex-col items-center"><span>ENG</span><span>FI</span></div>
        <svg width="24" height="20" viewBox="0 0 24 20" fill="none" stroke="#1b1b1b" strokeWidth="1.700" strokeLinecap="round" className="ml-[26px]"><path d="M1 7.500a15.500 15.500 0 0 1 22 0" stroke="#c3bebe" /><path d="M4.500 10.500a10.600 10.600 0 0 1 15 0M7.800 13.600a6 6 0 0 1 8.400 0" /><circle cx="12" cy="16.800" r="1.500" fill="#1b1b1b" stroke="none" /></svg>
        <svg width="26" height="22" viewBox="0 0 26 22" fill="none" stroke="#1b1b1b" strokeWidth="1.600" strokeLinejoin="round" strokeLinecap="round" className="ml-[11px]"><path d="M2 7.500h4L11.500 3v16L6 14.500H2ZM14.500 8.500c1 1.500 1 3.500 0 5" /><path d="M18 6c2.500 3 2.500 7 0 10M21.500 3.500c4 4.500 4 10.500 0 15" stroke="#c3bebe" /></svg>
        <svg width="26" height="22" viewBox="0 0 26 22" className="ml-[10px]"><rect x="3" y="6" width="19" height="13" rx="2.500" fill="none" stroke="#1b1b1b" strokeWidth="1.800" /><rect x="5.500" y="8.500" width="14" height="8" rx="1" fill="#1b1b1b" /><path d="M23 10h2v5h-2Z" fill="#1b1b1b" /><path d="M5.500 0 1 7h3L3 12l5.500-7H5.500L7 0Z" fill="#1b1b1b" stroke="#ece3e3" strokeWidth="0.500" /></svg>
        <div className="ml-[25px] flex flex-col items-end"><span>19.20</span><span>27/01/2025</span></div>
      </div>
    </footer>
  );
}

export default function App() {
  return (
    <div className="flex h-[1600px] w-[2560px] flex-col overflow-hidden bg-[#1e1e1e] font-['Inter',sans-serif]">
      <TabBar />
      <div className="flex h-[1471px] shrink-0">
        <LeftPanel />
        <Canvas />
        <RightPanel />
      </div>
      <Taskbar />
    </div>
  );
}
